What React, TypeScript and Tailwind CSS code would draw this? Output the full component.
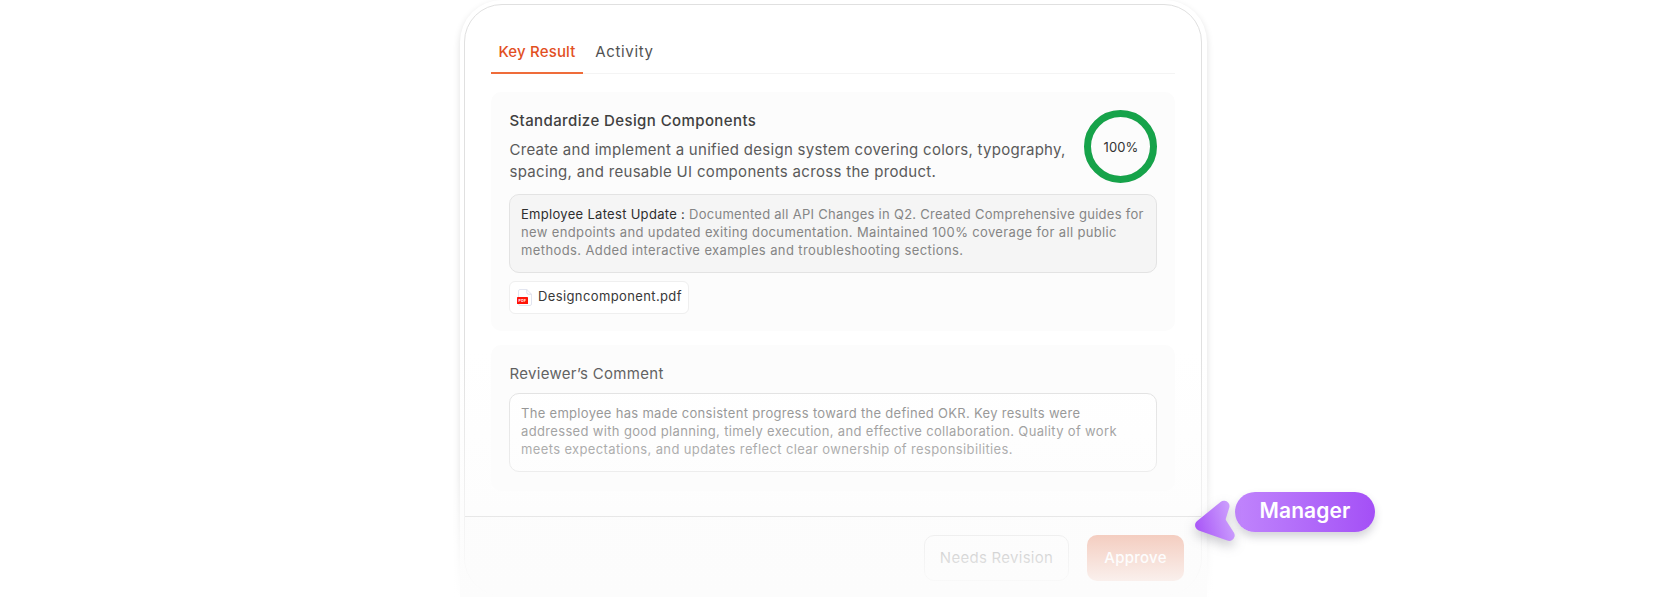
import { useState } from "react"

const TABS = [
  { id: "result", label: "Key Result", width: "w-[92px]", tracking: "tracking-[0.16px]" },
  { id: "activity", label: "Activity", width: "w-[83px]", tracking: "tracking-[0.65px]" },
]

function ProgressRing({ value }: { value: number }) {
  const r = 33
  const length = 2 * Math.PI * r
  return (
    <div className="relative size-[73px] shrink-0">
      <svg viewBox="0 0 73 73" className="size-full -rotate-90">
        <circle cx="36.5" cy="36.5" r={r} fill="none" stroke="#e5e5e5" strokeWidth="7" />
        <circle cx="36.5" cy="36.5" r={r} fill="none" stroke="#16a34a" strokeWidth="7"
          strokeDasharray={length} strokeDashoffset={length * (1 - value / 100)} />
      </svg>
      <span className="absolute inset-0 flex items-center justify-center pt-0.5 pl-px text-[13px] tracking-[0.1px] text-[#333]">{value}%</span>
    </div>
  )
}

function PdfIcon() {
  return (
    <svg width="15" height="17" viewBox="0 0 15 17" className="shrink-0">
      <path d="M3 .5h6.8l4.7 4.7V15a1.5 1.5 0 0 1-1.5 1.5H3A1.5 1.5 0 0 1 1.5 15V2A1.5 1.5 0 0 1 3 .5Z" fill="#fff" stroke="#e2e5f0" />
      <path d="M9.8.5v3.2a1.5 1.5 0 0 0 1.5 1.5h3.2" fill="none" stroke="#d9dcea" />
      <rect x="0" y="8" width="11" height="7" rx=".6" fill="#ff1408" />
      <text x="5.5" y="12.8" textAnchor="middle" fontSize="3.4" fontWeight="700" fill="#fff">PDF</text>
    </svg>
  )
}

/* Pointer with the reviewer's role next to it */
function ManagerCursor() {
  return (
    <div className="absolute top-[492px] left-[1190px] flex items-start">
      <svg width="45" height="56" viewBox="0 0 45 56" className="shrink-0 overflow-visible drop-shadow-[0_5px_6px_rgba(60,60,80,0.28)]">
        <defs>
          <linearGradient id="cursor" x1="5" y1="36" x2="42" y2="26" gradientUnits="userSpaceOnUse">
            <stop offset="0" stopColor="#a855f7" />
            <stop offset="1" stopColor="#cb9dfd" />
          </linearGradient>
        </defs>
        <path d="M10.6 33.2 34 14.2 30.4 25.6Q29.8 28.8 31.4 31.2L39.2 43.4Z"
          fill="url(#cursor)" stroke="url(#cursor)" strokeWidth="11" strokeLinejoin="round" />
      </svg>
      <div className="flex h-10 w-[140px] items-center justify-center rounded-full bg-linear-to-r from-[#c084fc] to-[#a44ff6] pb-0.5 text-[21px] font-semibold tracking-[0.1px] text-white shadow-[0_5px_9px_rgba(60,60,80,0.22)]">
        Manager
      </div>
    </div>
  )
}

export default function App() {
  const [tab, setTab] = useState("result")

  return (
    <div className="relative h-[597px] w-full overflow-hidden bg-white font-['Inter',sans-serif] whitespace-nowrap">
      <div className="ml-[460px] h-[640px] w-[747px] rounded-[42px] bg-white px-1 pt-1 shadow-[0_3px_7px_rgba(0,0,0,0.13)]">
        <div className="flex h-[592px] w-[738px] flex-col overflow-hidden rounded-[38px] border border-[#e0e0e0] bg-white">
          <div className="mx-[26px] mt-[26px] flex h-[43px] w-[684px] shrink-0 border-b border-[#f4f4f4]">
            {TABS.map(t => (
              <button key={t.id} onClick={() => setTab(t.id)}
                className={`${t.width} ${t.tracking} -mb-px flex justify-center pt-[9px] text-[15px] leading-[24px] ${tab === t.id ? "border-b-2 border-[#ef6c3a] font-medium text-[#e2501f]" : "text-[#525252]"}`}>
                {t.label}
              </button>
            ))}
          </div>

          <section className="mx-[26px] mt-[18px] flex h-[239px] w-[684px] shrink-0 flex-col rounded-[10px] bg-[#fcfcfc] px-[18px] pt-[18px]">
            <div className="flex justify-between">
              <div className="pl-[0.5px] text-[15px] text-[#5a5a5a]">
                <h2 className="h-[29px] leading-[22px] font-medium tracking-[0.4px] text-[#404040]">Standardize Design Components</h2>
                <p className="leading-[22px] tracking-[0.28px]">Create and implement a unified design system covering colors, typography,</p>
                <p className="leading-[22px] tracking-[0.31px]">spacing, and reusable UI components across the product.</p>
              </div>
              <ProgressRing value={100} />
            </div>

            <div className="mt-[11px] h-[79px] shrink-0 rounded-[10px] border border-[#e3e3e3] bg-[#f5f5f5] px-[11px] pt-[10px] text-[13px] leading-[18px] text-[#858585]">
              <p className="tracking-[0.275px]"><span className="tracking-[0.3px] text-[#2e2e2e]">Employee Latest Update : </span>Documented all API Changes in Q2. Created Comprehensive guides for</p>
              <p className="tracking-[0.36px]">new endpoints and updated exiting documentation. Maintained 100% coverage for all public</p>
              <p className="tracking-[0.39px]">methods. Added interactive examples and troubleshooting sections.</p>
            </div>

            <a href="#" className="mt-2 flex h-[33px] w-[180px] items-center gap-[6px] rounded-md border border-[#efefef] bg-white px-[7px] pb-px text-[13px] tracking-[0.38px] text-[#383838]">
              <PdfIcon />
              Designcomponent.pdf
            </a>
          </section>

          <section className="mx-[26px] mt-[14px] h-[146px] w-[684px] shrink-0 rounded-[10px] bg-[#fcfcfc] px-[18px] pt-[17px]">
            <h3 className="h-[31px] pl-[0.5px] text-[15px] leading-[23px] tracking-[0.3px] text-[#525252]">Reviewer’s Comment</h3>
            <div className="h-[79px] rounded-[10px] border border-[#dedede] bg-white px-[11px] pt-[10px] text-[13px] leading-[18px] text-[#777]">
              <p className="tracking-[0.3px]">The employee has made consistent progress toward the defined OKR. Key results were</p>
              <p className="tracking-[0.34px]">addressed with good planning, timely execution, and effective collaboration. Quality of work</p>
              <p className="tracking-[0.37px]">meets expectations, and updates reflect clear ownership of responsibilities.</p>
            </div>
          </section>

          <footer className="mt-[25px] flex grow items-start justify-end gap-[18px] border-t border-[#bdbdbd] bg-[#fdfdfd] pt-[18px] pr-[17px] text-[15px]">
            <button className="h-[46px] w-[145px] rounded-[10px] border border-[#c8c8c8] bg-[#fdfdfd] tracking-[0.28px] text-[#222]">Needs Revision</button>
            <button className="h-[46px] w-[97px] rounded-[10px] bg-[#dc430f] font-medium tracking-[0.27px] text-white">Approve</button>
          </footer>
        </div>
      </div>

      {/* fades the bottom of the panel out, its shadow included */}
      <div className="pointer-events-none absolute top-[350px] left-[440px] flex h-[247px] w-[787px]">
        <div className="w-5 bg-linear-to-b from-white/0 from-50% to-white" />
        <div className="grow bg-linear-to-b from-white/0 to-[#fcfcfc]" />
        <div className="w-5 bg-linear-to-b from-white/0 from-50% to-white" />
      </div>

      <ManagerCursor />
    </div>
  )
}
